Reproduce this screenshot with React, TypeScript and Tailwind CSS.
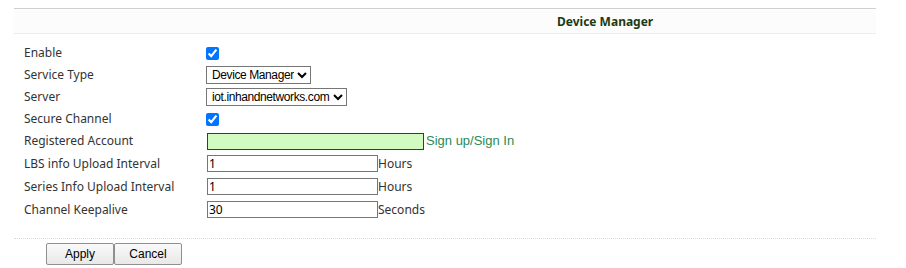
import { useState } from 'react';

const font = { fontFamily: '"Noto Sans", "Open Sans", sans-serif' };
const arial = { fontFamily: '"Liberation Sans", Arial, sans-serif' };

export default function App() {
  const [account, setAccount] = useState('');
  const [lbs, setLbs] = useState('1');
  const [series, setSeries] = useState('1');
  const [keepalive, setKeepalive] = useState('30');

  const label = 'flex items-center text-[12px] text-[#333]';
  const row = 'grid grid-cols-[182px_1fr]';
  const textInput =
    'w-[171px] h-[17px] border border-[#767676] px-[1px] text-[12px] text-black outline-none';
  const select =
    'h-[18px] border border-[#767676] text-[12px] tracking-[-0.4px] text-black pl-[1px]';

  return (
    <div className="w-[906px] h-[268px] bg-white px-[14px] pt-2" style={font}>
      <div className="w-[862px] border-t border-[#cfcfcf]">
        <div className="mt-[1px] h-[24px] flex items-center bg-[#fcfcfc] border-b border-[#ececec] pl-[543px]">
          <span className="text-[12px] font-bold text-[#1c3a12]">Device Manager</span>
        </div>

        <div className="mt-[8px] pl-[10px]">
          <div className={`${row} h-[22px]`}>
            <span className={label}>Enable</span>
            <div className="flex items-center">
              <input type="checkbox" defaultChecked className="m-0 w-[13px] h-[13px]" />
            </div>
          </div>
          <div className={`${row} h-[22px]`}>
            <span className={label}>Service Type</span>
            <div className="flex items-center">
              <select className={select} style={arial}>
                <option>Device Manager</option>
              </select>
            </div>
          </div>
          <div className={`${row} h-[22px]`}>
            <span className={label}>Server</span>
            <div className="flex items-center">
              <select className={select} style={arial}>
                <option>iot.inhandnetworks.com</option>
              </select>
            </div>
          </div>
          <div className={`${row} h-[22px]`}>
            <span className={label}>Secure Channel</span>
            <div className="flex items-center">
              <input type="checkbox" defaultChecked className="m-0 w-[13px] h-[13px]" />
            </div>
          </div>
          <div className={`${row} h-[22px]`}>
            <span className={label}>Registered Account</span>
            <div className="flex items-center pl-[1px]">
              <input
                value={account}
                onChange={e => setAccount(e.target.value)}
                className="w-[217px] h-[17px] border border-[#3a3a3a] bg-[#d2fbc2] text-[12px] outline-none"
              />
              <a className="ml-[2px] text-[13px] text-[#2a8a55] cursor-pointer" style={arial}>
                Sign up/Sign In
              </a>
            </div>
          </div>
          <div className={`${row} h-[23px]`}>
            <span className={label}>LBS info Upload Interval</span>
            <div className="flex items-center pl-[1px]">
              <input value={lbs} onChange={e => setLbs(e.target.value)} className={textInput} />
              <span className="text-[12px] text-[#333]">Hours</span>
            </div>
          </div>
          <div className={`${row} h-[23px]`}>
            <span className={label}>Series Info Upload Interval</span>
            <div className="flex items-center pl-[1px]">
              <input value={series} onChange={e => setSeries(e.target.value)} className={textInput} />
              <span className="text-[12px] text-[#333]">Hours</span>
            </div>
          </div>
          <div className={`${row} h-[23px]`}>
            <span className={label}>Channel Keepalive</span>
            <div className="flex items-center pl-[1px]">
              <input
                value={keepalive}
                onChange={e => setKeepalive(e.target.value)}
                className={textInput}
              />
              <span className="text-[12px] text-[#333]">Seconds</span>
            </div>
          </div>
        </div>

        <div className="mt-[17px] border-t border-dotted border-[#dcdcdc]" />

        <div className="mt-[4px] pl-[32px] flex" style={arial}>
          <button className="w-[68px] h-[22px] border border-[#8f8f8f] rounded-[2px] bg-gradient-to-b from-[#fafafa] to-[#e8e8e8] text-[12px] text-black">
            Apply
          </button>
          <button className="w-[68px] h-[22px] border border-[#8f8f8f] rounded-[2px] bg-gradient-to-b from-[#fafafa] to-[#e8e8e8] text-[12px] text-black">
            Cancel
          </button>
        </div>
      </div>
    </div>
  );
}
